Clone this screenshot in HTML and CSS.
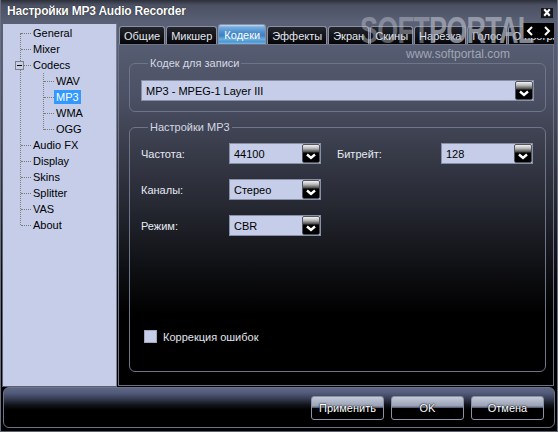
FILE: index.html
```html
<!DOCTYPE html>
<html>
<head>
<meta charset="utf-8">
<link rel="stylesheet" href="styles.css">
</head>
<body>
<div class="window">
  <div class="titlebar">
    <span class="title">Настройки MP3 Audio Recorder</span>
    <span class="close"><svg width="13" height="11" viewBox="0 0 13 11"><path d="M3.5 2 L9.5 9 M9.5 2 L3.5 9" stroke="#fff" stroke-width="2.2" fill="none"/></svg></span>
  </div>
  <div class="main">
    <div class="tree">
      <div class="node"><span class="lbl">General</span></div>
      <div class="node"><span class="lbl">Mixer</span></div>
      <div class="node"><span class="minus"></span><span class="lbl">Codecs</span></div>
      <div class="children">
        <div class="node l2"><span class="lbl">WAV</span></div>
        <div class="node l2"><span class="lbl sel">MP3</span></div>
        <div class="node l2"><span class="lbl">WMA</span></div>
        <div class="node l2"><span class="lbl">OGG</span></div>
      </div>
      <div class="node"><span class="lbl">Audio FX</span></div>
      <div class="node"><span class="lbl">Display</span></div>
      <div class="node"><span class="lbl">Skins</span></div>
      <div class="node"><span class="lbl">Splitter</span></div>
      <div class="node"><span class="lbl">VAS</span></div>
      <div class="node"><span class="lbl">About</span></div>
    </div>
    <div class="right">
      <div class="tabs">
        <div class="tab">Общие</div>
        <div class="tab">Микшер</div>
        <div class="tab active">Кодеки</div>
        <div class="tab">Эффекты</div>
        <div class="tab">Экран</div>
        <div class="tab">Скины</div>
        <div class="tab">Нарезка</div>
        <div class="tab">Голос</div>
        <div class="tab">О программе</div>
      </div>
      <div class="page">
        <fieldset class="group g1">
          <legend>Кодек для записи</legend>
          <div class="combo">
            <span class="val">MP3 - MPEG-1 Layer III</span>
            <span class="drop"><svg width="16" height="17" viewBox="0 0 16 17"><path d="M4 9.5 L8 13 L12 9.5" stroke="#fff" stroke-width="2.4" fill="none"/></svg></span>
          </div>
        </fieldset>
        <fieldset class="group g2">
          <legend>Настройки MP3</legend>
          <div class="grid">
            <span class="lab">Частота:</span>
            <div class="combo">
              <span class="val">44100</span>
              <span class="drop"><svg width="16" height="17" viewBox="0 0 16 17"><path d="M4 9.5 L8 13 L12 9.5" stroke="#fff" stroke-width="2.4" fill="none"/></svg></span>
            </div>
            <span class="lab lab2">Битрейт:</span>
            <div class="combo">
              <span class="val">128</span>
              <span class="drop"><svg width="16" height="17" viewBox="0 0 16 17"><path d="M4 9.5 L8 13 L12 9.5" stroke="#fff" stroke-width="2.4" fill="none"/></svg></span>
            </div>
            <span class="lab">Каналы:</span>
            <div class="combo">
              <span class="val">Стерео</span>
              <span class="drop"><svg width="16" height="17" viewBox="0 0 16 17"><path d="M4 9.5 L8 13 L12 9.5" stroke="#fff" stroke-width="2.4" fill="none"/></svg></span>
            </div>
            <span></span><span></span>
            <span class="lab">Режим:</span>
            <div class="combo">
              <span class="val">CBR</span>
              <span class="drop"><svg width="16" height="17" viewBox="0 0 16 17"><path d="M4 9.5 L8 13 L12 9.5" stroke="#fff" stroke-width="2.4" fill="none"/></svg></span>
            </div>
          </div>
          <div class="check"><span class="box"></span><span>Коррекция ошибок</span></div>
        </fieldset>
      </div>
    </div>
  </div>
  <div class="bottombar">
    <div class="btn">Применить</div>
    <div class="btn">OK</div>
    <div class="btn">Отмена</div>
  </div>

  <div class="tabarrows">
    <svg width="30" height="14" viewBox="0 0 30 14"><path d="M8 3 L4 7 L8 11" stroke="#fff" stroke-width="2" fill="none"/><path d="M21 3 L25 7 L21 11" stroke="#fff" stroke-width="2" fill="none"/></svg>
  </div>
  <div class="watermark">
    <div class="wm-big"><span class="soft">SOFT</span><span class="portal">PORTAL</span></div>
    <div class="wm-url">www.softportal.com</div>
  </div>
</div>
</body>
</html>
```
FILE: styles.css
```css
* { box-sizing: border-box; }
html, body { margin: 0; padding: 0; }
body {
  width: 558px;
  height: 432px;
  overflow: hidden;
  font-family: "Liberation Sans", Arial, sans-serif;
  font-size: 11px;
  background: #000;
}
.window {
  position: relative;
  width: 558px;
  height: 432px;
  overflow: hidden;
  display: flex;
  flex-direction: column;
  border-left: 1px solid #6a7082;
  border-right: 1px solid #6a7082;
  border-bottom: 1px solid #5a6072;
  background: linear-gradient(to bottom, #2c2f38 0px, #4b5062 5px, #5a6075 22px, #535970 70px, #3c404e 140px, #22242c 210px, #0a0a0d 280px, #000 330px);
}
.titlebar {
  height: 22px;
  display: flex;
  align-items: center;
  padding-left: 6px;
  padding-right: 3px;
}
.title {
  color: #fff;
  font-weight: bold;
  font-size: 12px;
  letter-spacing: -0.2px;
  text-shadow: 0 0 1px #000;
}
.close {
  margin-left: auto;
  margin-top: 3px;
  width: 14px;
  height: 12px;
  background: #16171b;
  border: 1px solid #50566a;
  display: flex;
  align-items: center;
  justify-content: center;
}
.main {
  height: 365px;
  display: flex;
}
/* tree */
.tree {
  position: relative;
  margin-left: 1px;
  margin-top: 1px;
  width: 115px;
  height: 364px;
  background: #c5cde8;
  border: 1px solid #5a6070;
  border-right-color: #7a8094;
  padding-top: 1px;
  color: #000;
}
.tree::before {
  content: '';
  position: absolute;
  left: 17px;
  top: 9px;
  height: 192px;
  border-left: 1px dotted #7a7a7a;
}
.node {
  position: relative;
  height: 16px;
  display: flex;
  align-items: center;
  padding-left: 28px;
}
.node::before {
  content: '';
  position: absolute;
  left: 18px;
  top: 8px;
  width: 10px;
  border-top: 1px dotted #7a7a7a;
}
.children { position: relative; }
.children::before {
  content: '';
  position: absolute;
  left: 40px;
  top: 0;
  height: 57px;
  border-left: 1px dotted #7a7a7a;
}
.node.l2 { padding-left: 51px; }
.node.l2::before { left: 41px; }
.lbl {
  padding: 0 2px;
  line-height: 14px;
}
.lbl.sel { background: #3399ff; color: #fff; }
.minus {
  position: absolute;
  left: 12px;
  top: 4px;
  width: 9px;
  height: 9px;
  border: 1px solid #808080;
  background: #c5cde8;
  z-index: 1;
}
.minus::after {
  content: '';
  position: absolute;
  left: 1px;
  top: 3px;
  width: 5px;
  height: 1px;
  background: #000;
}
/* right side */
.right {
  flex: 1;
  margin-left: 1px;
  margin-right: 3px;
  display: flex;
  flex-direction: column;
  min-width: 0;
}
.tabs {
  height: 22px;
  display: flex;
  align-items: flex-end;
  gap: 1px;
  padding-left: 1px;
  overflow: hidden;
  white-space: nowrap;
}
.tab {
  height: 18px;
  padding: 0 4px;
  display: flex;
  align-items: center;
  color: #e4e8f2;
  background: linear-gradient(to bottom, #23252c, #050507);
  border: 1px solid #8a90a2;
  border-bottom: none;
  border-radius: 3px 3px 0 0;
  flex: none;
}
.tab.active {
  height: 20px;
  padding: 0 5px;
  color: #fff;
  background: linear-gradient(to bottom, #c4dcf4 0, #78aee0 2px, #4a8ccc 40%, #3e80c2 55%, #6aaee0 75%, #4c96d2 88%, #78b8e6 100%);
}
.page {
  height: 342px;
  border: 1px solid #6d7386;
  display: flex;
  flex-direction: column;
  background: linear-gradient(to bottom, #565c71 0px, #4c5165 50px, #3a3e4c 100px, #262832 160px, #101115 220px, #000 270px);
}
.group {
  margin: 0 7px 0 10px;
  border: 1px solid #6f7589;
  border-radius: 6px;
  padding: 0;
  min-width: 0;
}
.group legend {
  color: #d4d8e4;
  padding: 0 2px;
  margin-left: 7px;
  line-height: 13px;
}
.g1 {
  margin-top: 12px;
  padding: 10px 11px 10px 11px;
}
.g2 {
  margin-top: 9px;
  margin-bottom: 13px;
  flex: 1;
  padding: 9px 11px 0 11px;
}
.combo {
  height: 21px;
  background: #c5cde8;
  border: 1px solid #8890a6;
  display: flex;
  align-items: center;
  color: #000;
}
.combo .val { padding-left: 4px; flex: 1; }
.drop {
  width: 18px;
  height: 19px;
  border-radius: 2px;
  border: 1px solid #50545e;
  background: linear-gradient(to bottom, #f4f4f4 0, #b8b8b8 20%, #5a5a5a 38%, #000 48%, #000 100%);
  display: flex;
  align-items: flex-start;
  justify-content: center;
}
.grid {
  display: grid;
  grid-template-columns: 88px 92px 120px 92px;
  grid-template-rows: 21px 21px 21px;
  row-gap: 15px;
  align-items: center;
}
.lab { color: #e6eaf4; }
.lab2 { padding-left: 16px; }
.check {
  margin-top: 94px;
  margin-left: 3px;
  display: flex;
  align-items: center;
  gap: 6px;
  color: #e0e4ee;
}
.check .box {
  width: 13px;
  height: 13px;
  background: #c5cde8;
  border: 1px solid #a0a8c0;
}
/* bottom bar */
.bottombar {
  height: 41px;
  margin: 0 2px 0 2px;
  border: 1px solid #6d7386;
  border-radius: 6px;
  background: linear-gradient(to bottom, #5e6686 0px, #535b7a 5px, #343a50 11px, #111319 17px, #000 22px);
  display: flex;
  justify-content: flex-end;
  align-items: flex-start;
  gap: 7px;
  padding: 8px 10px 0 0;
}
.btn {
  width: 73px;
  height: 24px;
  border: 1px solid #8a92a8;
  border-radius: 3px;
  background: linear-gradient(to bottom, #c4cad8 0, #9aa2b6 40%, #5a6078 48%, #000 52%, #000 100%);
  color: #fff;
  text-shadow: 0 0 2px #000, 0 0 1px #000;
  display: flex;
  align-items: center;
  justify-content: center;
}
/* overlays */
.tabarrows {
  position: absolute;
  left: 522px;
  top: 23px;
  width: 31px;
  height: 15px;
  background: #000;
  display: flex;
  align-items: center;
  justify-content: center;
}
.watermark {
  position: absolute;
  left: 359px;
  top: 12px;
  width: 192px;
  pointer-events: none;
}
.wm-big {
  width: 192px;
  font-size: 36px;
  line-height: 38px;
  font-weight: bold;
  transform: scaleX(0.75);
  transform-origin: left top;
  white-space: nowrap;
  letter-spacing: -1px;
}
.soft { color: rgba(195, 200, 210, 0.45); }
.portal { color: rgba(165, 170, 182, 0.8); }
.wm-url {
  margin-left: 46px;
  margin-top: -3px;
  font-size: 12px;
  color: #a0a6b4;
}
```
